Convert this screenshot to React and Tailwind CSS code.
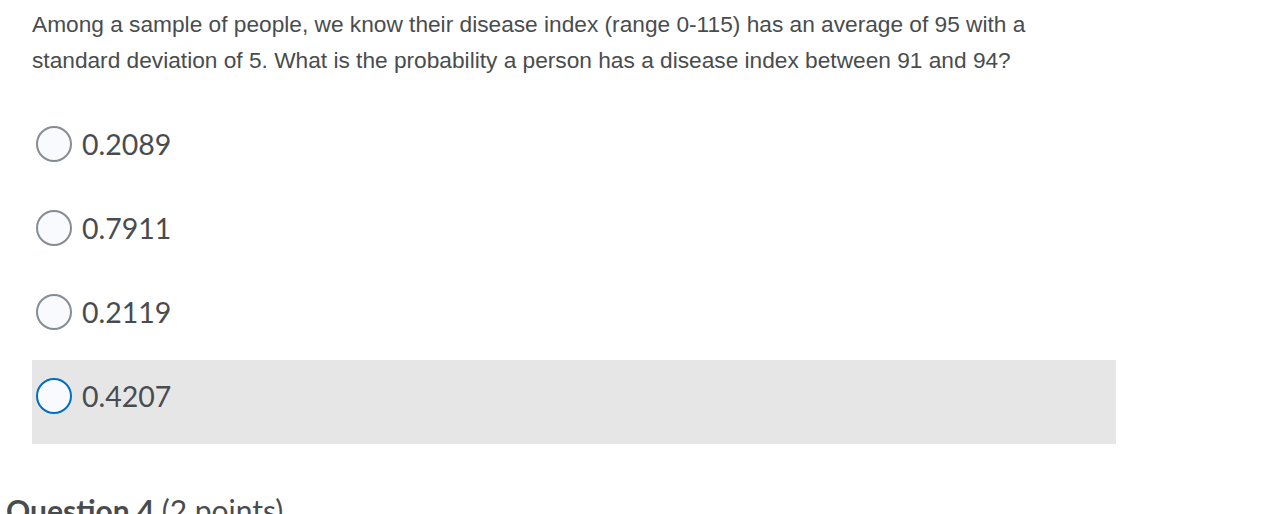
import React, { useState } from 'react';

const options = ['0.2089', '0.7911', '0.2119', '0.4207'];

const Radio = ({ active }) => (
  <span
    className={`w-[36px] h-[36px] rounded-full bg-[#f9fafe] shrink-0 ${
      active ? 'border-2 border-[#006fbf]' : 'border-2 border-[#868c93]'
    }`}
  />
);

const App = () => {
  const [hovered] = useState(3);

  return (
    <div className="w-[1266px] h-[514px] overflow-hidden bg-white text-[#494c4e]">
      <p
        className="pl-[32px] pt-[6px] text-[22.7px] leading-[36px] whitespace-nowrap"
        style={{ fontFamily: '"Liberation Sans", Arial, sans-serif' }}
      >
        Among a sample of people, we know their disease index (range 0-115) has an average of 95 with a
        <br />
        standard deviation of 5. What is the probability a person has a disease index between 91 and 94?
      </p>

      <div className="ml-[32px] w-[1084px] mt-[30px]">
        {options.map((opt, i) => (
          <label
            key={opt}
            className={`h-[84px] flex items-start pt-[18px] pl-[4px] gap-[10px] ${
              i === hovered ? 'bg-[#e6e6e6]' : ''
            }`}
          >
            <Radio active={i === hovered} />
            <span
              className="text-[28.5px] leading-[36px] text-[#494c4e]"
              style={{ fontFamily: 'Lato, sans-serif' }}
            >
              {opt}
            </span>
          </label>
        ))}
      </div>

      <h2
        className="pl-[6px] mt-[49px] text-[30px] leading-[34px] font-bold text-[#494c4e] whitespace-nowrap"
        style={{ fontFamily: 'Lato, sans-serif' }}
      >
        Question 4 <span className="font-normal">(2 points)</span>
      </h2>
    </div>
  );
};

export default App;
